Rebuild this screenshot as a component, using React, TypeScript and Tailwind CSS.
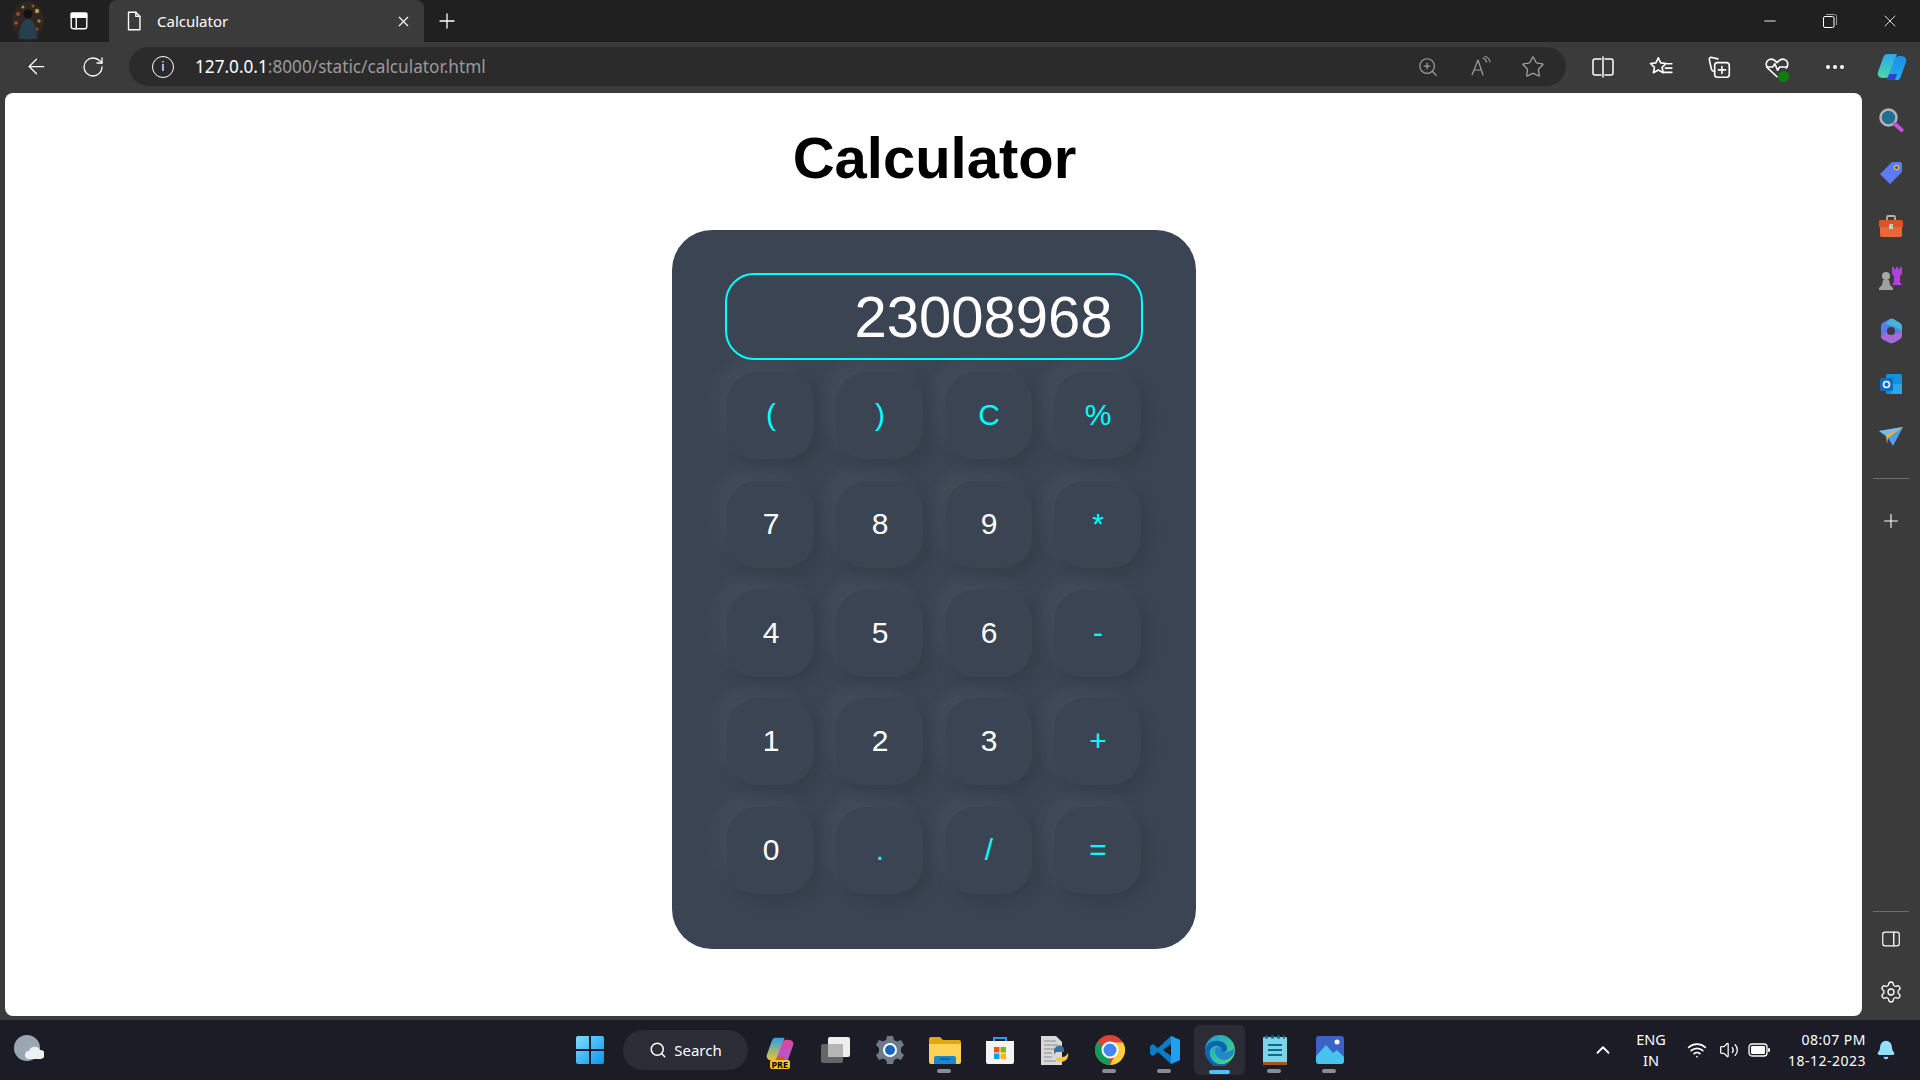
import type { ReactNode } from 'react';
import { ArrowLeft, Bell, ChevronUp, Minus, MoreHorizontal, Plus, RotateCw, Search, Settings, Star, Volume2, Wifi, X, ZoomIn } from 'lucide-react';

const CHROME_FONT = 'font-["Noto_Sans","Open_Sans",sans-serif]';

const keys = [
  { label: '(', accent: true },
  { label: ')', accent: true },
  { label: 'C', accent: true },
  { label: '%', accent: true },
  { label: '7' },
  { label: '8' },
  { label: '9' },
  { label: '*', accent: true },
  { label: '4' },
  { label: '5' },
  { label: '6' },
  { label: '-', accent: true },
  { label: '1' },
  { label: '2' },
  { label: '3' },
  { label: '+', accent: true },
  { label: '0' },
  { label: '.', accent: true },
  { label: '/', accent: true },
  { label: '=', accent: true }
];

const Icon = ({ size = 24, children }: { size?: number; children: ReactNode }) => (
  <svg width={size} height={size} viewBox="0 0 24 24" fill="none" stroke="currentColor" strokeWidth="1.5" strokeLinecap="round" strokeLinejoin="round">
    {children}
  </svg>
);

const Avatar = () => (
  <svg width="32" height="40" viewBox="0 0 32 40">
    <ellipse cx="16" cy="20" rx="16" ry="19.5" fill="#2e2620" />
    <circle cx="6" cy="13" r="2" fill="#a8412a" />
    <circle cx="11" cy="6" r="1.500" fill="#c08a30" />
    <circle cx="25" cy="10" r="2.200" fill="#b89a3a" />
    <circle cx="21" cy="5" r="1.500" fill="#8a5a2a" />
    <circle cx="27" cy="20" r="1.800" fill="#a8762c" />
    <circle cx="4" cy="22" r="1.800" fill="#b5482c" />
    <circle cx="25" cy="28" r="1.500" fill="#a8412a" />
    <circle cx="16" cy="13" r="4.500" fill="#141210" />
    <path d="M7 38c0-13 4-20 9-20s9 7 9 20z" fill="#27404e" />
  </svg>
);

const EdgeLogo = ({ size }: { size: number }) => (
  <svg width={size} height={size} viewBox="0 0 32 32">
    <defs>
      <linearGradient id="edgeTop" x1="0" y1="0" x2="1" y2="1">
        <stop offset="0" stopColor="#1a9bd8" />
        <stop offset="0.6" stopColor="#34c3a0" />
        <stop offset="1" stopColor="#6fd85c" />
      </linearGradient>
    </defs>
    <circle cx="16" cy="16" r="15" fill="url(#edgeTop)" />
    <path d="M1 16C2 9 9 6 15 7c6 1 9 5 8 9-1 2-4 3-6 2 2-4-2-7-6-6-5 1-7 7-4 12 2 4 7 7 12 6 2 0 5-1 7-3-3 5-8 7-13 7C6 30 1 24 1 16z" fill="#0c64b0" />
    <path d="M12 14c3-2 6 0 5 3-1 2 3 3 6 1 3-1 6-2 7-4 1 5-3 12-10 12-6 0-11-7-8-12z" fill="#1d7fd0" opacity="0.9" />
  </svg>
);

const Copilot = ({ size, warm }: { size: number; warm?: boolean }) => (
  <svg width={size} height={size} viewBox="0 0 32 32">
    <defs>
      <linearGradient id={warm ? 'copWarmA' : 'copA'} x1="0" y1="0" x2="0" y2="1">
        <stop offset="0" stopColor={warm ? '#2a9fe8' : '#2aa8ee'} />
        <stop offset="1" stopColor={warm ? '#f2c22e' : '#4fd8a0'} />
      </linearGradient>
      <linearGradient id={warm ? 'copWarmB' : 'copB'} x1="0" y1="0" x2="0" y2="1">
        <stop offset="0" stopColor={warm ? '#e0469c' : '#1f8ee8'} />
        <stop offset="1" stopColor={warm ? '#a55ce0' : '#1eaef0'} />
      </linearGradient>
    </defs>
    <path d="M11 3h10l-7 20c-1 3-3 4-5 4H7c-4 0-6-3-5-6L7 7c1-3 2-4 4-4z" fill={`url(#${warm ? 'copWarmA' : 'copA'})`} />
    <path d="M21 29H11l7-20c1-3 3-4 5-4h2c4 0 6 3 5 6l-5 14c-1 3-2 4-4 4z" fill={`url(#${warm ? 'copWarmB' : 'copB'})`} />
    <path d="M11 29h8l2-6h-8z" fill={warm ? '#d0562a' : '#2a45c8'} />
  </svg>
);

const WinLogo = () => (
  <svg width="30" height="30" viewBox="0 0 30 30">
    <defs>
      <linearGradient id="winGrad" x1="0" y1="0" x2="1" y2="1">
        <stop offset="0" stopColor="#7fdcff" />
        <stop offset="1" stopColor="#0a96ee" />
      </linearGradient>
    </defs>
    <path d="M1 3a2 2 0 0 1 2-2h11v13H1zM16 1h11a2 2 0 0 1 2 2v11H16zM1 16h13v13H3a2 2 0 0 1-2-2zM16 16h13v11a2 2 0 0 1-2 2H16z" fill="url(#winGrad)" />
  </svg>
);

const TaskIcon = ({ children, dot, active }: { children: ReactNode; dot?: boolean; active?: boolean }) => (
  <div className="relative flex h-[50px] w-[55px] shrink-0 items-center justify-center">
    {active ? <div className="absolute inset-x-[2px] inset-y-0 rounded-md bg-[#2b2c36]" /> : null}
    <div className="relative flex">{children}</div>
    {dot ? <div className="absolute bottom-[2px] left-[20px] h-[4px] w-[14px] rounded-full bg-[#8b8c92]" /> : null}
    {active ? <div className="absolute bottom-[1px] left-[17px] h-[4px] w-[21px] rounded-full bg-[#4cc2ff]" /> : null}
  </div>
);

const TabBar = () => (
  <div className="flex h-[42px] shrink-0 items-center bg-[#202020] text-white">
    <div className="flex w-[56px] justify-center">
      <Avatar />
    </div>
    <div className="flex w-[46px] justify-center">
      <Icon size={22}>
        <rect x="3.5" y="3.5" width="17" height="17" rx="2.5" />
        <path d="M3.5 8h17M9 8v12.5" />
        <path d="M3.5 3.5h17V8h-17z" fill="currentColor" />
      </Icon>
    </div>
    <div className={`${CHROME_FONT} ml-[7px] flex h-full w-[315px] items-center rounded-t-lg bg-[#3b3b3b] pl-[14px] pr-[12px] text-[15px]`}>
      <Icon size={22}>
        <path d="M6 2.5h8l4.5 4.5v14.5H6z" />
        <path d="M14 2.5V7h4.5" />
      </Icon>
      <span className="ml-[12px] flex-1">Calculator</span>
      <X size={17} strokeWidth={1.6} />
    </div>
    <div className="flex w-[46px] justify-center">
      <Plus size={24} strokeWidth={1.3} />
    </div>
    <div className="flex-1" />
    <div className="flex w-[60px] justify-center">
      <Minus size={18} strokeWidth={1.2} />
    </div>
    <div className="flex w-[60px] justify-center">
      <svg width="14" height="14" viewBox="0 0 14 14" fill="none" stroke="currentColor" strokeWidth="1">
        <rect x="0.5" y="2.5" width="10.5" height="11" rx="1.5" />
        <path d="M3 .5h8.5a2 2 0 0 1 2 2V11" stroke="#9a9a9a" />
      </svg>
    </div>
    <div className="flex w-[60px] justify-center">
      <X size={20} strokeWidth={1} />
    </div>
  </div>
);

const Toolbar = () => (
  <div className="flex h-[51px] shrink-0 items-center pb-[2px] text-white">
    <div className="ml-[9px] flex w-14 justify-center">
      <ArrowLeft size={25} strokeWidth={1.2} />
    </div>
    <div className="ml-[2px] flex w-14 justify-center">
      <RotateCw size={24} strokeWidth={1.3} />
    </div>
    <div className={`${CHROME_FONT} ml-[9px] flex h-[39px] w-[1437px] shrink-0 items-center rounded-full bg-[#2b2b2b] pr-[7px]`}>
      <div className="ml-[23px] flex h-[22px] w-[22px] items-center justify-center rounded-full border-[1.5px] border-white text-[13px] leading-none">i</div>
      <div className="ml-[21px] flex-1 text-[17.2px]">
        127.0.0.1<span className="text-[#9b9b9b]">:8000/static/calculator.html</span>
      </div>
      <div className="flex w-[54px] justify-center text-[#a0a0a0]">
        <ZoomIn size={22} strokeWidth={1.3} />
      </div>
      <div className="flex w-[52px] justify-center text-[#a0a0a0]">
        <Icon size={24}>
          <path d="M3 20 9 5l5 15M5 15h7" strokeWidth="1.2" />
          <path d="M14 3c2 .5 3 2 3.500 4M16 1.500c2.500.5 4.500 3 5 5.500" strokeWidth="1.2" />
        </Icon>
      </div>
      <div className="flex w-[52px] justify-center text-[#a0a0a0]">
        <Star size={24} strokeWidth={1.3} />
      </div>
    </div>
    <div className="ml-[8px] flex w-[58px] shrink-0 justify-center">
      <Icon size={24}>
        <path d="M10 4H4a2 2 0 0 0-2 2v12a2 2 0 0 0 2 2h6M14 4h6a2 2 0 0 1 2 2v12a2 2 0 0 1-2 2h-6M12 2v20" />
      </Icon>
    </div>
    <div className="flex w-[58px] shrink-0 justify-center">
      <Icon size={26}>
        <path d="m9.500 3.500 2.200 4.700 5 .6-3.700 3.500 1 5-4.500-2.500L5 17.300l1-5-3.700-3.500 5-.6z" />
        <path d="M17.500 9H22M16 13h6M14.500 17H22" />
      </Icon>
    </div>
    <div className="flex w-[58px] shrink-0 justify-center">
      <Icon size={26}>
        <rect x="8" y="8" width="13.500" height="13.500" rx="2.500" />
        <path d="M11 4.500 4.500 3A2 2 0 0 0 3 5l2 9c.2 1 1 2 3 2M14.700 11.500v6.500M11.500 14.700H18" />
      </Icon>
    </div>
    <div className="relative flex w-[58px] shrink-0 justify-center">
      <Icon size={26}>
        <path d="M12 21 3.500 13C1 10 2 6 5 5c3-1 5 .5 7 3 2-2.500 4-4 7-3 3 1 4 5 1.500 8" />
        <path d="M2.500 12H8l2-3 2.500 6 2-3h6" />
      </Icon>
      <div className="absolute bottom-[-2px] left-[30px] h-[11px] w-[11px] rounded-full bg-[#107c10]" />
    </div>
    <div className="flex w-[58px] shrink-0 justify-center">
      <MoreHorizontal size={24} strokeWidth={2} />
    </div>
    <div className="flex w-[56px] shrink-0 justify-center">
      <Copilot size={32} />
    </div>
  </div>
);

const SideItem = ({ children }: { children: ReactNode }) => <div className="flex h-[52.7px] w-full items-center justify-center">{children}</div>;

const Sidebar = () => (
  <div className="flex w-[58px] shrink-0 flex-col items-center pt-px text-white">
    <SideItem>
      <svg width="26" height="26" viewBox="0 0 26 26">
        <circle cx="10.500" cy="10.500" r="8" fill="#1f6f94" stroke="#b4b4b4" strokeWidth="2.500" />
        <path d="m17 17 6.500 6" stroke="#c94fe0" strokeWidth="4" strokeLinecap="round" />
      </svg>
    </SideItem>
    <SideItem>
      <svg width="24" height="24" viewBox="0 0 24 24">
        <path d="M14 1h7a2 2 0 0 1 2 2v7a2 2 0 0 1-1 2L11 23 1 13 12 2a3 3 0 0 1 2-1z" fill="#5b7cf4" />
        <circle cx="17.500" cy="6.500" r="2.200" fill="#3a4a9a" stroke="#f2c22e" strokeWidth="1.200" />
      </svg>
    </SideItem>
    <SideItem>
      <svg width="26" height="24" viewBox="0 0 26 24">
        <path d="M9 6V3a1 1 0 0 1 1-1h6a1 1 0 0 1 1 1v3" fill="none" stroke="#b0b0b0" strokeWidth="1.800" />
        <path d="M1 8a2 2 0 0 1 2-2h20a2 2 0 0 1 2 2v5H1z" fill="#d9542a" />
        <path d="M2 13h22v8a2 2 0 0 1-2 2H4a2 2 0 0 1-2-2z" fill="#e8683c" />
        <rect x="11" y="10" width="4" height="5" fill="#c8c8c8" />
      </svg>
    </SideItem>
    <SideItem>
      <svg width="26" height="26" viewBox="0 0 26 26">
        <path d="M14 2h2v2h2V2h2v2h2V2h2v7l-2 2v6l2 3H14l2-3v-6l-2-2z" fill="#b43fe0" />
        <circle cx="8" cy="11" r="4" fill="#a8a8a8" />
        <path d="M5 15h6l1 5 3 3v2H1v-2l3-3z" fill="#a0a0a0" />
      </svg>
    </SideItem>
    <SideItem>
      <svg width="24" height="26" viewBox="0 0 24 26">
        <path d="M11 1c2-.5 3 0 5 1l5 3c1 1 2 2 2 4v8c0 2-1 3-2 4l-5 3c-2 1-3 1.500-5 1L5 22c-2-1-3-2-3-4V8c0-2 1-3 3-4z" fill="#5a7ce8" />
        <path d="M11 1c2-.5 3 0 5 1l5 3c1 1 2 2 2 4v4l-6-4-10-3z" fill="#43b5d8" />
        <path d="M2 18c0 2 1 3 3 4l6 3c2 .5 3 0 5-1l5-3c1-1 2-2 2-4v-3l-9 3-7-2z" fill="#a868d8" />
        <circle cx="12" cy="13" r="4" fill="#3b3b3b" />
      </svg>
    </SideItem>
    <SideItem>
      <svg width="24" height="24" viewBox="0 0 24 24">
        <rect x="7" y="2" width="16" height="20" rx="1.500" fill="#1490df" />
        <path d="M12 12h11v10H12z" fill="#28a8ea" />
        <rect x="1" y="6" width="13" height="13" rx="1.500" fill="#0f6cbd" />
        <circle cx="7.500" cy="12.500" r="3" fill="none" stroke="#fff" strokeWidth="1.600" />
      </svg>
    </SideItem>
    <SideItem>
      <svg width="26" height="20" viewBox="0 0 26 20">
        <path d="M1 5 25 1 15 20 10 12z" fill="#4f9ef0" />
        <path d="M1 5 25 1 8 9z" fill="#6cc0f5" />
        <path d="M8 9 25 1 10 12l-1 6z" fill="#eeb02e" />
      </svg>
    </SideItem>
    <div className="mt-[15px] h-px w-[36px] shrink-0 bg-[#6d6d6d]" />
    <div className="mt-[22px] flex h-10 items-center justify-center">
      <Plus size={22} strokeWidth={1.2} />
    </div>
    <div className="mt-auto h-px w-[36px] bg-[#6d6d6d]" />
    <div className="mt-[3px] flex h-12 items-center justify-center">
      <Icon size={22}>
        <rect x="3" y="4.500" width="18" height="15" rx="2.500" strokeWidth="1.300" />
        <path d="M15 4.500v15" strokeWidth="1.500" />
      </Icon>
    </div>
    <div className="mt-[5px] flex h-12 items-center justify-center">
      <Settings size={24} strokeWidth={1.3} />
    </div>
  </div>
);

const CalculatorPage = () => (
  <div className="flex w-[1857px] shrink-0 flex-col items-center rounded-lg bg-white pt-[36px]">
    <h1 className='pl-[2px] font-["Liberation_Sans",Arial,sans-serif] text-[58px] font-bold leading-none text-black'>Calculator</h1>
    <div className='mt-[43px] flex h-[719px] w-[524px] flex-col items-center rounded-[40px] bg-[#3a4452] pt-[43px] font-["Liberation_Sans",Arial,sans-serif]'>
      <div className="flex h-[87px] w-[418px] items-center justify-end rounded-[29px] border-2 border-[#00ffff] pr-[28px] text-[58px] text-white">23008968</div>
      <div className="mt-[12px] grid grid-cols-[repeat(4,87px)] gap-x-[22px] gap-y-[21.75px]">
        {keys.map((key) => (
          <button
            key={key.label}
            className={`flex h-[87px] w-[87px] items-center justify-center rounded-[30px] bg-[#3a4452] pb-[2px] pl-[2px] text-[30px] shadow-[-9.6px_-9.6px_18px_rgba(255,255,255,0.05),6px_6px_18px_rgba(0,0,0,0.1)] ${key.accent ? 'text-[#00ffff]' : 'text-white'}`}
          >
            {key.label}
          </button>
        ))}
      </div>
    </div>
  </div>
);

const Taskbar = () => (
  <div className={`${CHROME_FONT} relative flex h-[60px] shrink-0 items-center bg-[#1b1c26] text-white`}>
    <div className="flex w-[57px] shrink-0 justify-center">
      <svg width="30" height="30" viewBox="0 0 30 30">
        <circle cx="13" cy="13" r="13" fill="#9aa7b3" />
        <path d="M15 24a4 4 0 0 1 0-8 6 6 0 0 1 11-1 4.500 4.500 0 0 1 1 9z" fill="#eef1f4" />
      </svg>
    </div>
    <div className="ml-[505px] flex w-[56px] shrink-0 justify-center">
      <WinLogo />
    </div>
    <div className="ml-[5px] flex h-10 w-[125px] shrink-0 items-center justify-center rounded-full bg-[#2b2c35] text-[15px]">
      <Search size={18} strokeWidth={2} />
      <span className="ml-[7px]">Search</span>
    </div>
    <div className="ml-[4px] flex">
      <TaskIcon>
        <div className="relative">
          <Copilot size={30} warm />
          <div className="absolute bottom-[-4px] left-[5px] rounded-[2px] bg-[#f2c22e] px-[2px] text-[9px] font-bold leading-[9px] text-black">PRE</div>
        </div>
      </TaskIcon>
      <TaskIcon>
        <svg width="30" height="30" viewBox="0 0 30 30">
          <rect x="8" y="2" width="22" height="20" rx="2" fill="#eeeeee" />
          <rect x="1" y="9" width="22" height="19" rx="2" fill="#6e6e6e" opacity="0.9" />
          <rect x="8" y="9" width="15" height="13" fill="#b5b5b5" />
        </svg>
      </TaskIcon>
      <TaskIcon>
        <svg width="30" height="30" viewBox="0 0 30 30">
          <path d="M12 1h6l1 4 3 1.500L26 5l3 5-3 3v4l3 3-3 5-4-1.500-3 1.500-1 4h-6l-1-4-3-1.500L4 25l-3-5 3-3v-4l-3-3 3-5 4 1.500L11 5z" fill="#6f7a88" />
          <circle cx="15" cy="15" r="7" fill="#fff" />
          <circle cx="15" cy="15" r="5" fill="#1268c0" />
        </svg>
      </TaskIcon>
      <TaskIcon dot>
        <svg width="32" height="28" viewBox="0 0 32 28">
          <path d="M0 3a2 2 0 0 1 2-2h9l3 3h16a2 2 0 0 1 2 2v4H0z" fill="#e0a80e" />
          <path d="M0 8h32v18a2 2 0 0 1-2 2H2a2 2 0 0 1-2-2z" fill="#fcd356" />
          <path d="M5 28v-6a2 2 0 0 1 2-2h18a2 2 0 0 1 2 2v6z" fill="#1a86d0" />
          <path d="M11 23h10" stroke="#0d5a98" strokeWidth="1.500" />
        </svg>
      </TaskIcon>
      <TaskIcon>
        <svg width="30" height="30" viewBox="0 0 30 30">
          <path d="M9 7V3h12v4" fill="none" stroke="#29a0e0" strokeWidth="2" />
          <path d="M1 6h28v21a2 2 0 0 1-2 2H3a2 2 0 0 1-2-2z" fill="#f4f4f4" />
          <rect x="9" y="12" width="5.500" height="5.500" fill="#f25022" />
          <rect x="15.500" y="12" width="5.500" height="5.500" fill="#7fba00" />
          <rect x="9" y="18.500" width="5.500" height="5.500" fill="#00a4ef" />
          <rect x="15.500" y="18.500" width="5.500" height="5.500" fill="#ffb900" />
        </svg>
      </TaskIcon>
      <TaskIcon>
        <svg width="30" height="30" viewBox="0 0 30 30">
          <path d="M1 1h15l6 6v23H1z" fill="#d8d8d8" />
          <path d="M4 6h12M4 10h14M4 14h14M4 18h8M4 22h8M4 26h12" stroke="#8a8a8a" />
          <path d="M16 12c4-3 8-1 8 3v2h-6c-3 0-4 2-4 4v-4c0-2 0-4 2-5z" fill="#3572a5" />
          <path d="M28 18c1 5-2 9-8 9-3 0-4-2-4-4l6-1c3 0 5-2 6-4z" fill="#f4c93c" />
        </svg>
      </TaskIcon>
      <TaskIcon dot>
        <svg width="30" height="30" viewBox="0 0 30 30">
          <circle cx="15" cy="15" r="15" fill="#db4437" />
          <path d="M15 15 2 22.500A15 15 0 0 0 15 30z" fill="#0f9d58" />
          <path d="M15 15 2 22.500A15 15 0 0 1 2 7.500z" fill="#0f9d58" />
          <path d="M15 7.500h13A15 15 0 0 1 15 30l7-14z" fill="#ffcd40" />
          <circle cx="15" cy="15" r="7.500" fill="#4285f4" stroke="#fff" strokeWidth="2" />
        </svg>
      </TaskIcon>
      <TaskIcon dot>
        <svg width="30" height="30" viewBox="0 0 30 30">
          <path d="M21 1 30 5v20l-9 4L8 17l-5 4-3-2v-8l3-2 5 4z" fill="#0a7cc8" />
          <path d="M21 1 30 5v20l-9 4z" fill="#1ea1f1" />
          <path d="M21 9 13 15l8 6z" fill="#1b1c26" />
        </svg>
      </TaskIcon>
      <TaskIcon active>
        <EdgeLogo size={32} />
      </TaskIcon>
      <TaskIcon dot>
        <svg width="24" height="30" viewBox="0 0 24 30">
          <rect y="2" width="24" height="28" rx="1" fill="#7dd3ea" />
          <rect y="27" width="24" height="3" fill="#a5561f" />
          <path d="M2 2h20" stroke="#0e6a88" strokeWidth="3" strokeDasharray="3 3" />
          <path d="M5 10h14M5 15h14M5 20h14" stroke="#0e6a88" strokeWidth="2" />
        </svg>
      </TaskIcon>
      <TaskIcon dot>
        <svg width="28" height="28" viewBox="0 0 28 28">
          <rect width="28" height="28" rx="3" fill="#3a63c8" />
          <path d="M0 20 10 9l7 8 4-3 7 7v4a3 3 0 0 1-3 3H3a3 3 0 0 1-3-3z" fill="#46c4ee" />
          <circle cx="21" cy="6" r="2.500" fill="#fff" />
        </svg>
      </TaskIcon>
    </div>
    <div className="ml-[226px] flex w-[40px] shrink-0 justify-center">
      <ChevronUp size={22} strokeWidth={2} />
    </div>
    <div className="ml-[8px] w-[40px] shrink-0 text-center text-[14.5px] leading-[21px]">
      <div>ENG</div>
      <div>IN</div>
    </div>
    <div className="ml-[12px] flex w-[28px] shrink-0 justify-center">
      <Wifi size={20} strokeWidth={2} />
    </div>
    <div className="ml-[2px] flex w-[32px] shrink-0 justify-center">
      <Volume2 size={20} strokeWidth={1.5} />
    </div>
    <div className="flex w-[28px] shrink-0 justify-center">
      <svg width="22" height="14" viewBox="0 0 22 14">
        <rect x="1" y="1" width="18" height="12" rx="3" fill="none" stroke="#fff" strokeWidth="1.300" />
        <rect x="3" y="3" width="14" height="8" rx="1" fill="#fff" />
        <rect x="20" y="5" width="2" height="4" rx="1" fill="#fff" />
      </svg>
    </div>
    <div className="w-[93px] shrink-0 text-right text-[14px] leading-[21px] tracking-[0.5px]">
      <div>08:07 PM</div>
      <div>18-12-2023</div>
    </div>
    <div className="ml-[8px] flex w-[24px] shrink-0 justify-center text-[#93e0fb]">
      <Bell size={20} fill="currentColor" />
    </div>
  </div>
);

export default function App() {
  return (
    <div className="flex h-[1080px] w-[1920px] flex-col overflow-hidden bg-[#3b3b3b]">
      <TabBar />
      <Toolbar />
      <div className="flex h-[923px] shrink-0 pl-[5px]">
        <CalculatorPage />
        <Sidebar />
      </div>
      <div className="h-[4px] shrink-0" />
      <Taskbar />
    </div>
  );
}
